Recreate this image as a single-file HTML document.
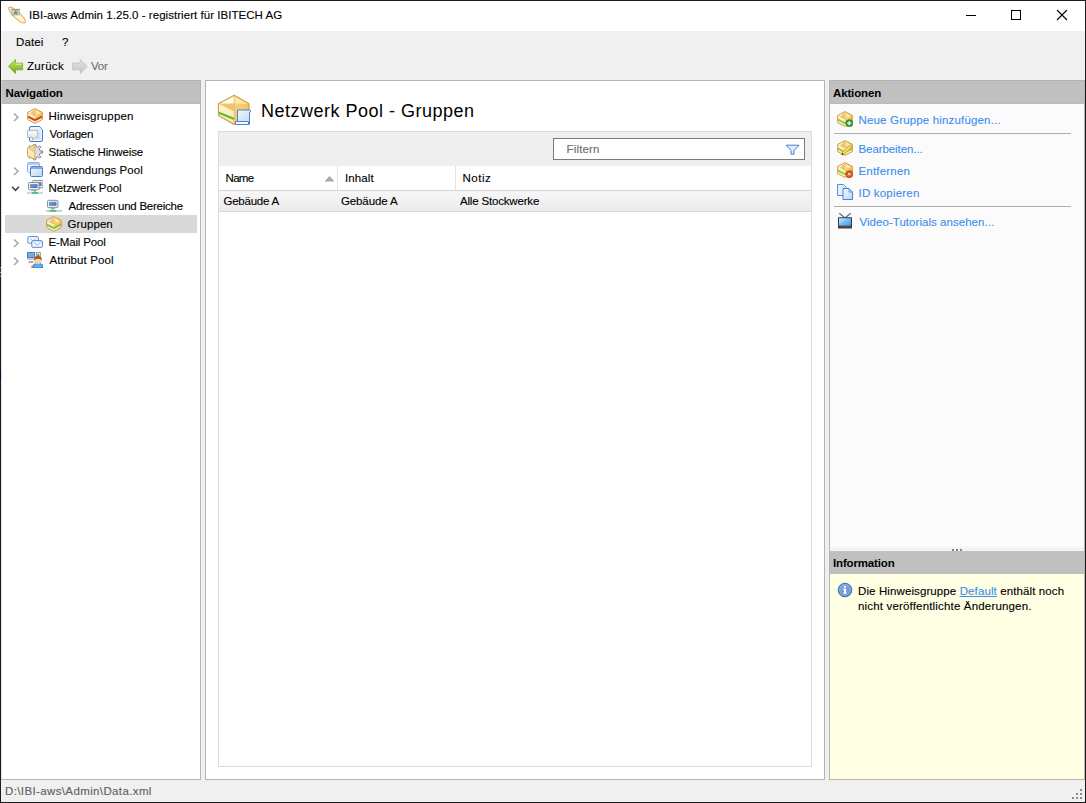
<!DOCTYPE html>
<html><head><meta charset="utf-8">
<style>
*{margin:0;padding:0;box-sizing:border-box}
html,body{width:1086px;height:803px;overflow:hidden;background:#f0f0f0}
body{position:relative;font-family:"Liberation Sans",sans-serif;font-size:11.5px;color:#000}
.a{position:absolute}
.t{position:absolute;white-space:nowrap;line-height:14px;-webkit-text-stroke:0.12px currentColor}
.hdr{position:absolute;background:#c0c0c0;border-top:1px solid #b2b2b2;height:24px}
</style></head><body>
<div class="a" style="left:0;top:0;width:1086px;height:803px;border:1px solid #1c1c1c"></div>
<div class="a" style="left:1px;top:1px;width:1084px;height:30px;background:#fff"></div>
<div class="a" style="left:966px;top:15px;width:10px;height:1px;background:#000"></div>
<div class="a" style="left:1011px;top:10px;width:10px;height:10px;border:1px solid #000"></div>
<svg class="a" style="left:1056px;top:9px" width="12" height="12"><path d="M1 1L11 11M11 1L1 11" stroke="#000" stroke-width="1.1"/></svg>

<div class="a" style="left:1px;top:80px;width:200px;height:700px;background:#fff;border-left:1px solid #e3e3e3;border-right:1px solid #b4b4b4;border-bottom:1px solid #b4b4b4"></div>
<div class="hdr" style="left:2px;top:80px;width:198px"></div><div class="a" style="left:2px;top:103px;width:198px;height:1px;background:#bbbbbb"></div><div class="a" style="left:1px;top:80px;width:1px;height:24px;background:#cfcfcf"></div>
<div class="a" style="left:5px;top:215px;width:192px;height:18px;background:#d9d9d9"></div>

<div class="a" style="left:205px;top:80px;width:620px;height:700px;background:#fff;border:1px solid #b4b4b4"></div>
<div class="a" style="left:218px;top:131px;width:594px;height:636px;border:1px solid #dcdcdc;background:#fff"></div>
<div class="a" style="left:219px;top:132px;width:592px;height:34px;background:#efefef"></div>
<div class="a" style="left:553px;top:138px;width:252px;height:22px;background:#fff;border:1px solid #7a7a7a"></div>
<div class="a" style="left:219px;top:190px;width:592px;height:1px;background:#d5d5d5"></div>
<div class="a" style="left:219px;top:191px;width:592px;height:20px;background:linear-gradient(#f7f7f7,#ebebeb)"></div>
<div class="a" style="left:219px;top:211px;width:592px;height:1px;background:#d5d5d5"></div>
<div class="a" style="left:337px;top:166px;width:1px;height:24px;background:#e5e5e5"></div>
<div class="a" style="left:455px;top:166px;width:1px;height:24px;background:#e5e5e5"></div>

<div class="a" style="left:829px;top:80px;width:256px;height:700px;background:#fbfbfb;border-left:1px solid #b4b4b4;border-right:1px solid #b4b4b4;border-bottom:1px solid #b4b4b4"></div>
<div class="hdr" style="left:830px;top:80px;width:254px"></div><div class="a" style="left:830px;top:103px;width:254px;height:1px;background:#bbbbbb"></div>
<div class="a" style="left:834px;top:133px;width:237px;height:1px;background:#aeaeae"></div>
<div class="a" style="left:834px;top:206px;width:237px;height:1px;background:#aeaeae"></div>
<div class="a" style="left:830px;top:547px;width:254px;height:4px;background:#f3f3f3"></div>
<div class="a" style="left:830px;top:551px;width:254px;height:23px;background:#c0c0c0"></div>
<div class="a" style="left:830px;top:574px;width:254px;height:205px;background:#ffffe3"></div>
<svg width="0" height="0" style="position:absolute"><defs>
<linearGradient id="gTop" x1="0" y1="0" x2="1" y2="1"><stop offset="0" stop-color="#fffbe8"/><stop offset="1" stop-color="#f4d27a"/></linearGradient>
<linearGradient id="gL" x1="0" y1="0" x2="0" y2="1"><stop offset="0" stop-color="#fff4d2"/><stop offset="1" stop-color="#fbe3a6"/></linearGradient>
<linearGradient id="gR" x1="0" y1="0" x2="1" y2="1"><stop offset="0" stop-color="#f9dc8a"/><stop offset="1" stop-color="#efb941"/></linearGradient>
<linearGradient id="gBlue" x1="0" y1="0" x2="1" y2="1"><stop offset="0" stop-color="#f4f8ff"/><stop offset="1" stop-color="#bcd5f6"/></linearGradient>
<linearGradient id="gScr" x1="0" y1="0" x2="1" y2="1"><stop offset="0" stop-color="#7aa5e0"/><stop offset="1" stop-color="#3d6fbf"/></linearGradient>
<linearGradient id="gArr" x1="0" y1="0" x2="0" y2="1"><stop offset="0" stop-color="#c8ec6a"/><stop offset="1" stop-color="#6aa815"/></linearGradient>
<linearGradient id="gArrG" x1="0" y1="0" x2="0" y2="1"><stop offset="0" stop-color="#e4e4e4"/><stop offset="1" stop-color="#c4c4c4"/></linearGradient>
<radialGradient id="gInfo" cx="0.45" cy="0.4" r="0.6"><stop offset="0" stop-color="#8db3e6"/><stop offset="1" stop-color="#4f7fc4"/></radialGradient>
<linearGradient id="gTV" x1="0" y1="0" x2="1" y2="1"><stop offset="0" stop-color="#aee0ff"/><stop offset="1" stop-color="#3c9be8"/></linearGradient>
</defs></svg>
<svg class="a" style="left:8px;top:6px" width="18" height="18" viewBox="0 0 18 18"><ellipse cx="9" cy="9" rx="11" ry="3.2" transform="rotate(43 9 9)" fill="#fff4dc"/><rect x="3.2" y="3.2" width="8.8" height="6.4" fill="#b3cff0"/><path d="M3.2 3.4H12" stroke="#6b87ab" stroke-width="0.9"/><path d="M6 8.8L7.6 4.8L9.2 8.8M6.6 7.4H8.6" stroke="#9c8a24" stroke-width="1.1" fill="none"/><ellipse cx="9" cy="9" rx="11" ry="3.2" transform="rotate(43 9 9)" fill="none" stroke="#eaa53a" stroke-width="1.1" opacity="0.85"/></svg>
<svg class="a" style="left:8px;top:59px" width="16" height="16" viewBox="0 0 16 16"><path d="M0.5 7.2L7.5 0.5V4.2H14.6V10.8H7.5V14.6Z" fill="url(#gArr)" stroke="#6cae1e" stroke-width="0.8" stroke-linejoin="round"/><path d="M7.8 5.2H13.6" stroke="#e6f8b8" stroke-width="1"/></svg>
<svg class="a" style="left:72px;top:59px" width="16" height="16" viewBox="0 0 16 16"><path d="M15.2 7.2L8.2 0.5V4.2H0.5V10.8H8.2V14.6Z" fill="url(#gArrG)" stroke="#c2c2c2" stroke-width="0.8" stroke-linejoin="round"/></svg>
<svg class="a" style="left:10px;top:107px" width="12" height="18" viewBox="0 0 12 18"><path d="M4 6.5L8 10.3L4 14" stroke="#a6a6a6" stroke-width="1.5" fill="none"/></svg>
<svg class="a" style="left:10px;top:161px" width="12" height="18" viewBox="0 0 12 18"><path d="M4 6.5L8 10.3L4 14" stroke="#a6a6a6" stroke-width="1.5" fill="none"/></svg>
<svg class="a" style="left:10px;top:233px" width="12" height="18" viewBox="0 0 12 18"><path d="M4 6.5L8 10.3L4 14" stroke="#a6a6a6" stroke-width="1.5" fill="none"/></svg>
<svg class="a" style="left:10px;top:251px" width="12" height="18" viewBox="0 0 12 18"><path d="M4 6.5L8 10.3L4 14" stroke="#a6a6a6" stroke-width="1.5" fill="none"/></svg>
<svg class="a" style="left:10px;top:179px" width="12" height="18" viewBox="0 0 12 18"><path d="M2 7.7L5.5 11.3L9 7.7" stroke="#404040" stroke-width="1.5" fill="none"/></svg>
<svg class="a" style="left:27px;top:108px" width="16" height="16" viewBox="0 0 16 16"><path d="M8 0.6L15.3 4.4V11.6L8 15.4L0.7 11.6V4.4Z" fill="#fdf1cc"/><path d="M8 1L15.3 4.4V9.2L8 12.6Z" fill="url(#gR)"/><path d="M0.9 4.6L8 1.2V8.8Z" fill="#eac575"/><path d="M1 4.5L7.6 1.2L3.5 5.2Z" fill="#fffaf0"/><path d="M9 2.5L14 5L10 6.5Z" fill="#fff2c8" opacity="0.8"/><path d="M0.9 8.6L8 12.2L15.1 8.6" stroke="#cf3d2c" stroke-width="1.9" fill="none"/><path d="M8 0.6L15.3 4.4V11.6L8 15.4L0.7 11.6V4.4Z" fill="none" stroke="#d49b3a" stroke-width="1"/></svg>
<svg class="a" style="left:27px;top:126px" width="16" height="16" viewBox="0 0 16 16"><path d="M3.5 0.5H12.3L15.5 3.7V14Q15.5 15.5 14 15.5H4Q2.5 15.5 2.5 14V2Q2.5 0.5 4 0.5Z" fill="#eef5fe" stroke="#3f7bd2" stroke-width="1"/><rect x="4.5" y="2.5" width="9" height="11" fill="url(#gBlue)" opacity="0.8"/><path d="M0.8 4.3H10.2Q10.7 4.3 10.7 4.8V10.8Q10.7 11.3 10.2 11.3H8L5.5 14.2V11.3H0.8Q0.3 11.3 0.3 10.8V4.8Q0.3 4.3 0.8 4.3Z" fill="#ebebeb" stroke="#b2b2b2" stroke-width="0.9"/><rect x="1.2" y="5.2" width="8.6" height="2.5" fill="#f8f8f8"/></svg>
<svg class="a" style="left:27px;top:144px" width="18" height="17" viewBox="0 0 18 17"><g transform="translate(7.7 8)"><path d="M5.50 -1.05L7.83 -1.05L7.83 1.05L5.50 1.05L4.63 3.15L6.28 4.79L4.79 6.28L3.15 4.63L1.05 5.50L1.05 7.83L-1.05 7.83L-1.05 5.50L-3.15 4.63L-4.79 6.28L-6.28 4.79L-4.63 3.15L-5.50 1.05L-7.83 1.05L-7.83 -1.05L-5.50 -1.05L-4.63 -3.15L-6.28 -4.79L-4.79 -6.28L-3.15 -4.63L-1.05 -5.50L-1.05 -7.83L1.05 -7.83L1.05 -5.50L3.15 -4.63L4.79 -6.28L6.28 -4.79L4.63 -3.15Z" fill="#e4e4e4" stroke="#707070" stroke-width="0.9" stroke-linejoin="round"/><circle r="2.6" fill="#cfcfcf"/><circle r="1.3" fill="#fff"/></g><path d="M0.3 4.5L7.7 0.2V15.7L0.3 11.7Z" fill="url(#gL)" stroke="#d49b3a" stroke-width="1" stroke-linejoin="round"/><path d="M1.5 5L7.2 1.5V9Z" fill="#f0c870" opacity="0.8"/><path d="M7.7 0.2V15.7" stroke="#c9c9c9" stroke-width="0.8"/></svg>
<svg class="a" style="left:27px;top:162px" width="16" height="16" viewBox="0 0 16 16"><rect x="0.5" y="0.5" width="12" height="10" rx="1" fill="#f3f6fb" stroke="#8fb0e0" stroke-width="1"/><rect x="1" y="1" width="11" height="2" fill="#b3ccef"/><rect x="3.5" y="4.5" width="12" height="10" rx="1" fill="url(#gBlue)" stroke="#4a80d0" stroke-width="1"/><rect x="4" y="5" width="11" height="2" fill="#87aee6"/></svg>
<svg class="a" style="left:27px;top:180px" width="16" height="16" viewBox="0 0 16 16"><rect x="5.5" y="0.5" width="10.5" height="7.3" rx="1" fill="#f0f0f0" stroke="#8d8d8d" stroke-width="1"/><rect x="7" y="2" width="7.5" height="4.0" fill="url(#gScr)"/><path d="M8.25 8.5H13.25" stroke="#a8a8a8" stroke-width="1.2"/><rect x="1.5" y="2.5" width="10.5" height="7.3" rx="1" fill="#f0f0f0" stroke="#8d8d8d" stroke-width="1"/><rect x="3" y="4" width="7.5" height="4.0" fill="url(#gScr)"/><path d="M4.25 10.5H9.25" stroke="#a8a8a8" stroke-width="1.2"/><path d="M0 13H16" stroke="#c6c9cd" stroke-width="1.6"/><path d="M5 12.9H11" stroke="#4cc08a" stroke-width="1.9"/><path d="M7.8 10.5V12" stroke="#4cc08a" stroke-width="1.4"/></svg>
<svg class="a" style="left:46px;top:198px" width="16" height="16" viewBox="0 0 16 16"><rect x="1.5" y="2.3" width="10.5" height="7.3" rx="1" fill="#f0f0f0" stroke="#8d8d8d" stroke-width="1"/><rect x="3" y="3.8" width="7.5" height="4.0" fill="url(#gScr)"/><path d="M4.25 10.299999999999999H9.25" stroke="#a8a8a8" stroke-width="1.2"/><path d="M0 12.9H16" stroke="#c6c9cd" stroke-width="1.8"/><path d="M3.8 12.9H10.2" stroke="#4cc08a" stroke-width="1.9"/><path d="M6.8 10.5V12" stroke="#4cc08a" stroke-width="1.4"/></svg>
<svg class="a" style="left:46px;top:216px" width="16" height="16" viewBox="0 0 16 16"><path d="M8 0.6L15.3 4.4V11.6L8 15.4L0.7 11.6V4.4Z" fill="#fdf1cc"/><path d="M8 1L15.3 4.4V9.2L8 12.6Z" fill="url(#gR)"/><path d="M0.9 4.6L8 1.2V8.8Z" fill="#eac575"/><path d="M1 4.5L7.6 1.2L3.5 5.2Z" fill="#fffaf0"/><path d="M9 2.5L14 5L10 6.5Z" fill="#fff2c8" opacity="0.8"/><path d="M0.9 8.6L8 12.2L15.1 8.6" stroke="#7ec43a" stroke-width="1.9" fill="none"/><path d="M8 0.6L15.3 4.4V11.6L8 15.4L0.7 11.6V4.4Z" fill="none" stroke="#d49b3a" stroke-width="1"/></svg>
<svg class="a" style="left:27px;top:234px" width="16" height="16" viewBox="0 0 16 16"><rect x="0.8" y="2.6" width="10.6" height="6.6" rx="0.8" fill="#f4f8fe" stroke="#5a8fd8" stroke-width="1"/><path d="M2.5 4L6 7L9.6 4" stroke="#8fb3e8" stroke-width="0.8" fill="none"/><rect x="4.8" y="6.7" width="10.6" height="6.6" rx="0.8" fill="#f4f8fe" stroke="#4f86d4" stroke-width="1"/><path d="M6.5 8.2L10.1 11.4L13.7 8.2" stroke="#7ea7e4" stroke-width="0.9" fill="none"/></svg>
<svg class="a" style="left:27px;top:252px" width="16" height="16" viewBox="0 0 16 16"><rect x="0" y="0" width="8" height="6" fill="#4f7fc4"/><rect x="1" y="1" width="6" height="4" fill="#80a8de"/><path d="M0 7H8" stroke="#c9c9c9" stroke-width="2"/><path d="M1.5 10H6.5" stroke="#8a8a8a" stroke-width="1.4"/><rect x="9.3" y="0.5" width="4" height="5" fill="#e8e8e8" stroke="#888" stroke-width="0.8"/><ellipse cx="11.2" cy="3.3" rx="1" ry="1.2" fill="#33aa33"/><path d="M6 16V13.5Q6.5 11.5 11 11.5Q15.5 11.5 16 13.5V16Z" fill="#5ab4f6" stroke="#2f5fc8" stroke-width="0.9"/><circle cx="10.9" cy="8" r="3.9" fill="#f6d2ad"/><path d="M7 8.5Q6.6 4 10.9 4Q15.2 4 14.8 8.5Q13.8 6.6 11.5 6.8Q8.5 6.5 7 8.5Z" fill="#9a5523"/><rect x="4.2" y="13.8" width="2" height="2" fill="#e67f22"/></svg>
<svg class="a" style="left:217px;top:93px" width="34" height="34" viewBox="0 0 34 34"><path d="M17.2 2.3L32 10.8V22.8L17.2 31.5L1.4 22.6V10.8Z" fill="#fde8b0"/><path d="M17.2 2.3L32 10.8V22.8L17.2 31.5Z" fill="url(#gR)"/><path d="M17.2 2.3L32 10.8L17.2 10.6Z" fill="#fbe6b0"/><path d="M17.2 2.3L1.4 10.8L17.2 10.6Z" fill="#fffbee"/><path d="M1.4 10.8L17.2 10.6V18.8Z" fill="#eec477"/><path d="M1.4 10.8L17.2 18.8V31.5L1.4 22.6Z" fill="url(#gL)"/><path d="M1.6 19.6L17.2 26" stroke="#3fc22e" stroke-width="2"/><path d="M17.2 2.3V31" stroke="#e2b55a" stroke-width="0.8"/><path d="M17.2 2.3L32 10.8V22.8L17.2 31.5L1.4 22.6V10.8Z" fill="none" stroke="#d49b3a" stroke-width="1.1" stroke-linejoin="round"/><path d="M20.5 17H32.5Q34 17 33.5 19L32.5 19.5V31.5H19.5V28.5H20.5Z" fill="url(#gBlue)" stroke="#4a84d8" stroke-width="1" stroke-linejoin="round"/><path d="M18.5 28.5H31.5V31.5H18.5Z" fill="#f6f9ff" stroke="#4a84d8" stroke-width="1"/></svg>
<svg class="a" style="left:324px;top:175px" width="11" height="7" viewBox="0 0 11 7"><path d="M0.5 6.5L5.5 1L10.5 6.5Z" fill="#a8a8a8"/></svg>
<svg class="a" style="left:785px;top:144px" width="15" height="11" viewBox="0 0 15 11"><path d="M1 1.2H14L9 6.5V10.2H6V6.5Z" fill="#dfeafb" stroke="#4a82d4" stroke-width="1" stroke-linejoin="round"/><path d="M2 1.5H13" stroke="#7ba2dd" stroke-width="1"/></svg>
<svg class="a" style="left:837px;top:111px" width="16" height="16" viewBox="0 0 16 16"><path d="M8 0.6L15.3 4.4V11.6L8 15.4L0.7 11.6V4.4Z" fill="#fdf1cc"/><path d="M8 1L15.3 4.4V9.2L8 12.6Z" fill="url(#gR)"/><path d="M0.9 4.6L8 1.2V8.8Z" fill="#eac575"/><path d="M1 4.5L7.6 1.2L3.5 5.2Z" fill="#fffaf0"/><path d="M9 2.5L14 5L10 6.5Z" fill="#fff2c8" opacity="0.8"/><path d="M0.9 8.6L8 12.2L15.1 8.6" stroke="#8fcf3c" stroke-width="1.9" fill="none"/><path d="M8 0.6L15.3 4.4V11.6L8 15.4L0.7 11.6V4.4Z" fill="none" stroke="#d49b3a" stroke-width="1"/><circle cx="12.3" cy="12.2" r="3.5" fill="#3f9a3a" stroke="#2b7a2a" stroke-width="0.8"/><path d="M12.3 10.2V14.2M10.3 12.2H14.3" stroke="#fff" stroke-width="1.3"/></svg>
<svg class="a" style="left:837px;top:140px" width="16" height="16" viewBox="0 0 16 16"><path d="M8 0.6L15.3 4.4V11.6L8 15.4L0.7 11.6V4.4Z" fill="#fdf1cc"/><path d="M8 1L15.3 4.4V9.2L8 12.6Z" fill="url(#gR)"/><path d="M0.9 4.6L8 1.2V8.8Z" fill="#eac575"/><path d="M1 4.5L7.6 1.2L3.5 5.2Z" fill="#fffaf0"/><path d="M9 2.5L14 5L10 6.5Z" fill="#fff2c8" opacity="0.8"/><path d="M0.9 8.6L8 12.2L15.1 8.6" stroke="#8fcf3c" stroke-width="1.9" fill="none"/><path d="M8 0.6L15.3 4.4V11.6L8 15.4L0.7 11.6V4.4Z" fill="none" stroke="#d49b3a" stroke-width="1"/><path d="M4.5 15L5.5 12.2L13 5L15 7L7.3 14.2Z" fill="#f4dc50" stroke="#c89a3a" stroke-width="0.7"/><path d="M4.5 15L5.3 12.7L6.8 14.2Z" fill="#3a2a1a"/></svg>
<svg class="a" style="left:837px;top:162px" width="16" height="16" viewBox="0 0 16 16"><path d="M8 0.6L15.3 4.4V11.6L8 15.4L0.7 11.6V4.4Z" fill="#fdf1cc"/><path d="M8 1L15.3 4.4V9.2L8 12.6Z" fill="url(#gR)"/><path d="M0.9 4.6L8 1.2V8.8Z" fill="#eac575"/><path d="M1 4.5L7.6 1.2L3.5 5.2Z" fill="#fffaf0"/><path d="M9 2.5L14 5L10 6.5Z" fill="#fff2c8" opacity="0.8"/><path d="M0.9 8.6L8 12.2L15.1 8.6" stroke="#8fcf3c" stroke-width="1.9" fill="none"/><path d="M8 0.6L15.3 4.4V11.6L8 15.4L0.7 11.6V4.4Z" fill="none" stroke="#d49b3a" stroke-width="1"/><circle cx="12.3" cy="12.2" r="3.5" fill="#e0561f" stroke="#b8411a" stroke-width="0.8"/><path d="M11 10.9L13.6 13.5M13.6 10.9L11 13.5" stroke="#fff" stroke-width="1"/></svg>
<svg class="a" style="left:837px;top:184px" width="16" height="16" viewBox="0 0 16 16"><path d="M0.5 0.5H6.5L9.5 3.5V11.5H0.5Z" fill="#e4eefc" stroke="#5b8fd8" stroke-width="1"/><path d="M6 4.5H12L15.5 8V15.5H6Z" fill="url(#gBlue)" stroke="#4a82d4" stroke-width="1"/><path d="M12 4.5V8H15.5" fill="none" stroke="#4a82d4" stroke-width="0.8"/></svg>
<svg class="a" style="left:837px;top:213px" width="16" height="16" viewBox="0 0 16 16"><path d="M2.2 0.3L7.5 4.5M13.6 0.3L8.5 4.5" stroke="#56708a" stroke-width="1.3"/><rect x="1" y="4.3" width="14" height="11.3" rx="0.6" fill="#3a3a3a"/><rect x="2" y="5.3" width="12" height="7.4" fill="url(#gTV)"/><path d="M2 5.3L9 5.3L2 11Z" fill="#c8ecff" opacity="0.35"/><path d="M3.5 14H5" stroke="#e02828" stroke-width="1.2"/><path d="M6 14H13.5" stroke="#8a8a8a" stroke-width="0.8" stroke-dasharray="1 1.2"/></svg>
<svg class="a" style="left:837px;top:582px" width="16" height="16" viewBox="0 0 16 16"><circle cx="8" cy="8" r="6.8" fill="url(#gInfo)" stroke="#3f6fb8" stroke-width="1"/><circle cx="8" cy="8" r="5.3" fill="none" stroke="#a9c6ee" stroke-width="0.8"/><rect x="7" y="4" width="2" height="1.6" fill="#fff"/><path d="M6.5 6.8H9V10.6H9.8V11.8H6.2V10.6H7V8H6.5Z" fill="#fff"/></svg>
<div class="a" style="left:952px;top:549px;width:2px;height:2px;background:#868686"></div>
<div class="a" style="left:956px;top:549px;width:2px;height:2px;background:#868686"></div>
<div class="a" style="left:960px;top:549px;width:2px;height:2px;background:#868686"></div>
<div class="a" style="left:1080px;top:789px;width:2px;height:2px;background:#8a8a8a"></div>
<div class="a" style="left:1076px;top:793px;width:2px;height:2px;background:#8a8a8a"></div>
<div class="a" style="left:1080px;top:793px;width:2px;height:2px;background:#8a8a8a"></div>
<div class="a" style="left:1072px;top:797px;width:2px;height:2px;background:#8a8a8a"></div>
<div class="a" style="left:1076px;top:797px;width:2px;height:2px;background:#8a8a8a"></div>
<div class="a" style="left:1080px;top:797px;width:2px;height:2px;background:#8a8a8a"></div>
<div class="a" style="left:0;top:267px;width:1px;height:10px;background:linear-gradient(#888 0 10%,#5a2e10 10% 45%,#999 45% 55%,#5a2e10 55% 90%,#888 90%)"></div>
<div class="a" style="left:0;top:370px;width:1px;height:9px;background:#0a0a3a"></div>
<div class="t" id="title" style="left:29.00px;top:8px;letter-spacing:0.042px;">IBI-aws Admin 1.25.0 - registriert für IBITECH AG</div>
<div class="t" id="datei" style="left:16.00px;top:35px;letter-spacing:0.125px;">Datei</div>
<div class="t" id="q" style="left:62.00px;top:35px;letter-spacing:-3.500px;">?</div>
<div class="t" id="zur" style="left:27.00px;top:59px;letter-spacing:0.300px;">Zurück</div>
<div class="t" id="vor" style="left:91.00px;top:59px;letter-spacing:-0.250px;color:#6d6d6d">Vor</div>
<div class="t" id="nav" style="left:5.50px;top:86px;letter-spacing:-0.167px;font-weight:bold;-webkit-text-stroke:0">Navigation</div>
<div class="t" id="tr0" style="left:48.50px;top:109px;letter-spacing:0.192px;">Hinweisgruppen</div>
<div class="t" id="tr1" style="left:49.50px;top:127px;letter-spacing:-0.214px;">Vorlagen</div>
<div class="t" id="tr2" style="left:48.50px;top:145px;letter-spacing:-0.147px;">Statische Hinweise</div>
<div class="t" id="tr3" style="left:49.50px;top:163px;letter-spacing:0.036px;">Anwendungs Pool</div>
<div class="t" id="tr4" style="left:48.50px;top:181px;letter-spacing:-0.083px;">Netzwerk Pool</div>
<div class="t" id="tr5" style="left:68.50px;top:199px;letter-spacing:-0.250px;">Adressen und Bereiche</div>
<div class="t" id="tr6" style="left:67.50px;top:217px;letter-spacing:0.083px;">Gruppen</div>
<div class="t" id="tr7" style="left:48.50px;top:235px;letter-spacing:-0.150px;">E-Mail Pool</div>
<div class="t" id="tr8" style="left:49.50px;top:253px;letter-spacing:0.125px;">Attribut Pool</div>
<div class="t" id="ctitle" style="left:261.00px;top:101px;letter-spacing:0.500px;font-size:18px;line-height:20px;-webkit-text-stroke:0">Netzwerk Pool - Gruppen</div>
<div class="t" id="filt" style="left:566.50px;top:142px;letter-spacing:0.167px;color:#6d6d6d">Filtern</div>
<div class="t" id="h1" style="left:225.50px;top:171px;letter-spacing:-0.667px;">Name</div>
<div class="t" id="h2" style="left:345.00px;top:171px;letter-spacing:0.100px;">Inhalt</div>
<div class="t" id="h3" style="left:462.50px;top:171px;letter-spacing:0.500px;">Notiz</div>
<div class="t" id="r1" style="left:223.50px;top:194px;letter-spacing:-0.250px;">Gebäude A</div>
<div class="t" id="r2" style="left:341.00px;top:194px;letter-spacing:-0.125px;">Gebäude A</div>
<div class="t" id="r3" style="left:460.00px;top:194px;letter-spacing:-0.179px;">Alle Stockwerke</div>
<div class="t" id="akt" style="left:833.00px;top:86px;letter-spacing:-0.143px;font-weight:bold;-webkit-text-stroke:0">Aktionen</div>
<div class="t" id="lk0" style="left:858.50px;top:113px;letter-spacing:0.167px;color:#3d8ef0">Neue Gruppe hinzufügen...</div>
<div class="t" id="lk1" style="left:858.50px;top:142px;letter-spacing:-0.083px;color:#3d8ef0">Bearbeiten...</div>
<div class="t" id="lk2" style="left:858.50px;top:164px;letter-spacing:0.188px;color:#3d8ef0">Entfernen</div>
<div class="t" id="lk3" style="left:858.50px;top:186px;letter-spacing:0.200px;color:#3d8ef0">ID kopieren</div>
<div class="t" id="lk4" style="left:859.50px;top:215px;letter-spacing:0.040px;color:#3d8ef0">Video-Tutorials ansehen...</div>
<div class="t" id="info" style="left:833.00px;top:556px;letter-spacing:-0.150px;font-weight:bold;-webkit-text-stroke:0">Information</div>
<div class="t" id="il1" style="left:858.00px;top:584px;letter-spacing:0.108px;">Die Hinweisgruppe <span style="color:#3d8ef0;text-decoration:underline">Default</span> enthält noch</div>
<div class="t" id="il2" style="left:858.00px;top:599px;letter-spacing:0.172px;">nicht veröffentlichte Änderungen.</div>
<div class="t" id="stat" style="left:5.00px;top:784px;letter-spacing:0.375px;color:#606060">D:\IBI-aws\Admin\Data.xml</div>
</body></html>
